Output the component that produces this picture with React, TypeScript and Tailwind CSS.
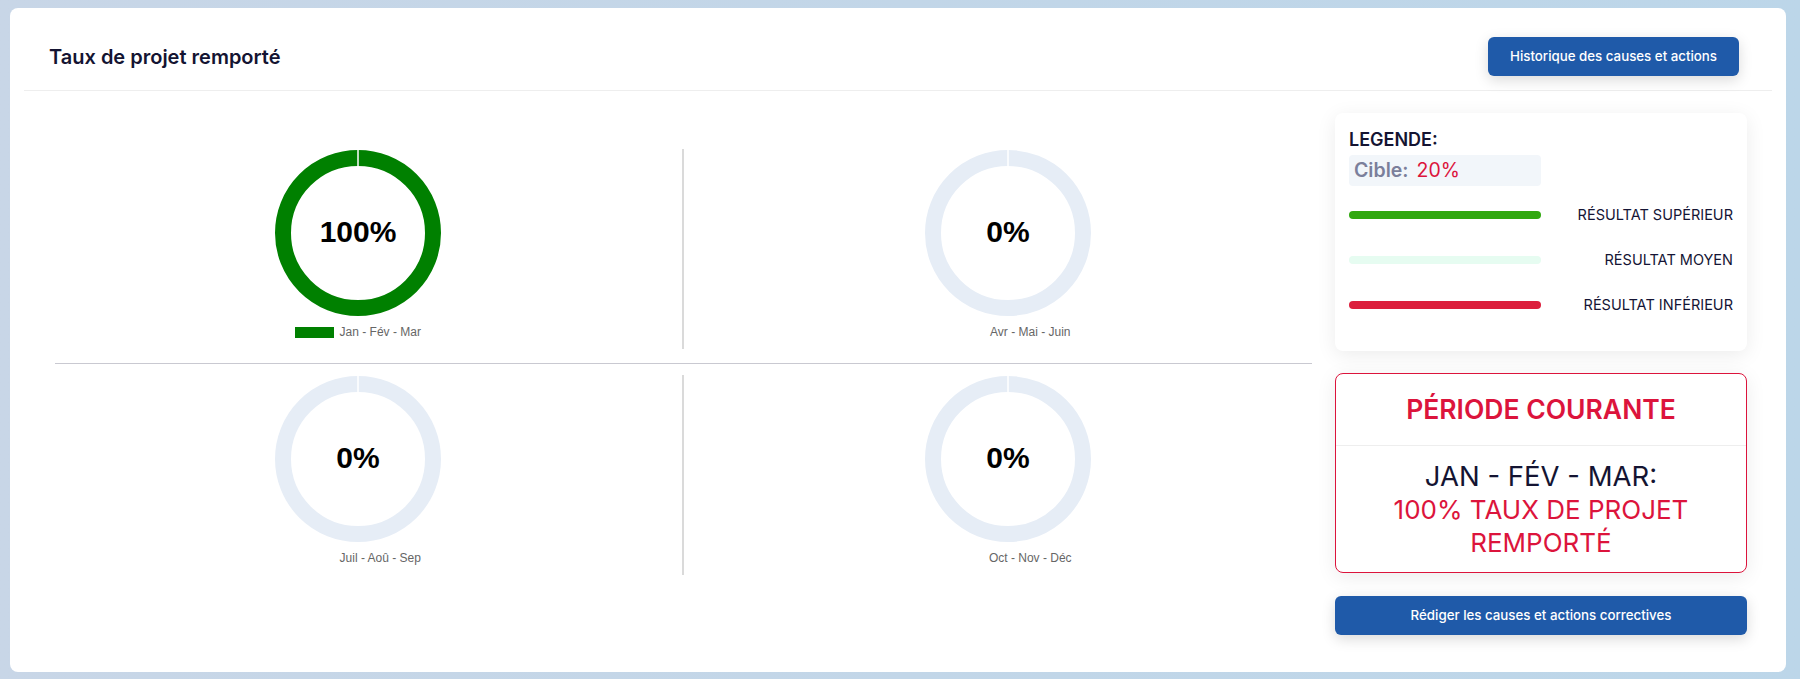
import React from "react";

type Quarter = { label: string; value: number };

const quarters: Quarter[] = [
  { label: "Jan - Fév - Mar", value: 100 },
  { label: "Avr - Mai - Juin", value: 0 },
  { label: "Juil - Aoû - Sep", value: 0 },
  { label: "Oct - Nov - Déc", value: 0 },
];

const Donut: React.FC<{ q: Quarter }> = ({ q }) => {
  const filled = q.value > 0;
  return (
    <div className="flex flex-col items-center pt-[1px]">
      <svg width="166" height="166" viewBox="0 0 166 166">
        <circle cx="83" cy="83" r="75" fill="none" stroke={filled ? "#008000" : "#e6edf6"} strokeWidth="16" />
        <line x1="83" y1="0" x2="83" y2="17" stroke="#ffffff" strokeWidth="1.5" />
        <text
          x="83"
          y="92"
          textAnchor="middle"
          fontFamily="'Liberation Sans', Arial, sans-serif"
          fontWeight="700"
          fontSize="30"
          fill="#000000"
        >
          {q.value}%
        </text>
      </svg>
      <div className="mt-[9px] flex items-center gap-[6px] font-['Liberation_Sans',Arial,sans-serif] text-[12px] leading-[14px] text-[#666666]">
        <span className={filled ? "w-[39px] h-[11px] bg-[#008000]" : "w-[39px] h-[11px]"} />
        <span>{q.label}</span>
      </div>
    </div>
  );
};

const LegendRow: React.FC<{ bar: string; label: string }> = ({ bar, label }) => (
  <div className="flex h-[45px] items-center justify-between">
    <span className={`h-[8px] w-[192px] rounded-full ${bar}`} />
    <span className="text-[14.5px] uppercase text-[#151535]">{label}</span>
  </div>
);

export default function App() {
  return (
    <div className="min-h-screen bg-gradient-to-r from-[#c8d6e7] to-[#bcd6e9] pl-[10px] pr-[14px] pt-[8px] pb-[7px] font-['Inter',sans-serif]">
      <div className="h-[664px] rounded-lg bg-white">
        {/* header */}
        <div className="mx-[14px] flex items-center justify-between border-b border-[#eeeeee] pl-[25px] pr-[33px] pt-[29px] pb-[14px]">
          <h1 className="text-[20px] font-semibold text-[#141432]">Taux de projet remporté</h1>
          <button className="h-[39px] w-[251px] rounded-md bg-[#1f5aa9] text-[13.3px] font-medium text-white shadow-[0_4px_14px_rgba(0,0,0,0.15)]">
            Historique des causes et actions
          </button>
        </div>

        <div className="flex gap-[23px] pl-[45px] pr-[39px] pt-[22px]">
          {/* charts */}
          <div className="flex-1 pt-[36px]">
            <div className="grid h-[200px] grid-cols-2">
              <div className="flex justify-center border-r-2 border-[#dadada] pr-[21px]">
                <Donut q={quarters[0]} />
              </div>
              <div className="flex justify-center pl-[20px]">
                <Donut q={quarters[1]} />
              </div>
            </div>
            <div className="mt-[14px] border-t border-[#c9c9d1]" />
            <div className="mt-[11px] grid h-[200px] grid-cols-2">
              <div className="flex justify-center border-r-2 border-[#dadada] pr-[21px]">
                <Donut q={quarters[2]} />
              </div>
              <div className="flex justify-center pl-[20px]">
                <Donut q={quarters[3]} />
              </div>
            </div>
          </div>

          {/* right column */}
          <div className="w-[412px]">
            <div className="h-[238px] rounded-lg bg-white px-[14px] pt-[14px] shadow-[0_4px_20px_rgba(0,0,0,0.08)]">
              <div className="text-[18px] font-semibold leading-[26px] text-[#141432]">LEGENDE:</div>
              <div className="mt-[2px] flex h-[31px] w-[192px] items-center gap-[8px] rounded bg-[#f2f6fa] px-[5px] text-[19.5px]">
                <span className="font-semibold text-[#7b7f9b]">Cible:</span>
                <span className="text-[#dc143c]">20%</span>
              </div>
              <div className="mt-[6px]">
                <LegendRow bar="bg-[#30a80f]" label="Résultat supérieur" />
                <LegendRow bar="bg-[#e6fcf1]" label="Résultat moyen" />
                <LegendRow bar="bg-[#dc1e3c]" label="Résultat inférieur" />
              </div>
            </div>

            <div className="mt-[22px] h-[200px] rounded-lg border border-[#dc143c] bg-white shadow-[0_4px_20px_rgba(0,0,0,0.08)]">
              <div className="flex h-[72px] items-center justify-center border-b border-[#eeeeee] text-[26.5px] font-semibold text-[#dc143c]">
                PÉRIODE COURANTE
              </div>
              <div className="flex h-[126px] flex-col items-center justify-center text-center text-[26px] leading-[33px]">
                <div className="text-[27.5px] text-[#141432]">JAN - FÉV - MAR:</div>
                <div className="text-[#dc143c]">100% TAUX DE PROJET</div>
                <div className="text-[#dc143c]">REMPORTÉ</div>
              </div>
            </div>

            <button className="mt-[23px] h-[39px] w-full rounded-md bg-[#1f5aa9] text-[13.3px] font-medium text-white shadow-[0_4px_14px_rgba(0,0,0,0.15)]">
              Rédiger les causes et actions correctives
            </button>
          </div>
        </div>
      </div>
    </div>
  );
}
